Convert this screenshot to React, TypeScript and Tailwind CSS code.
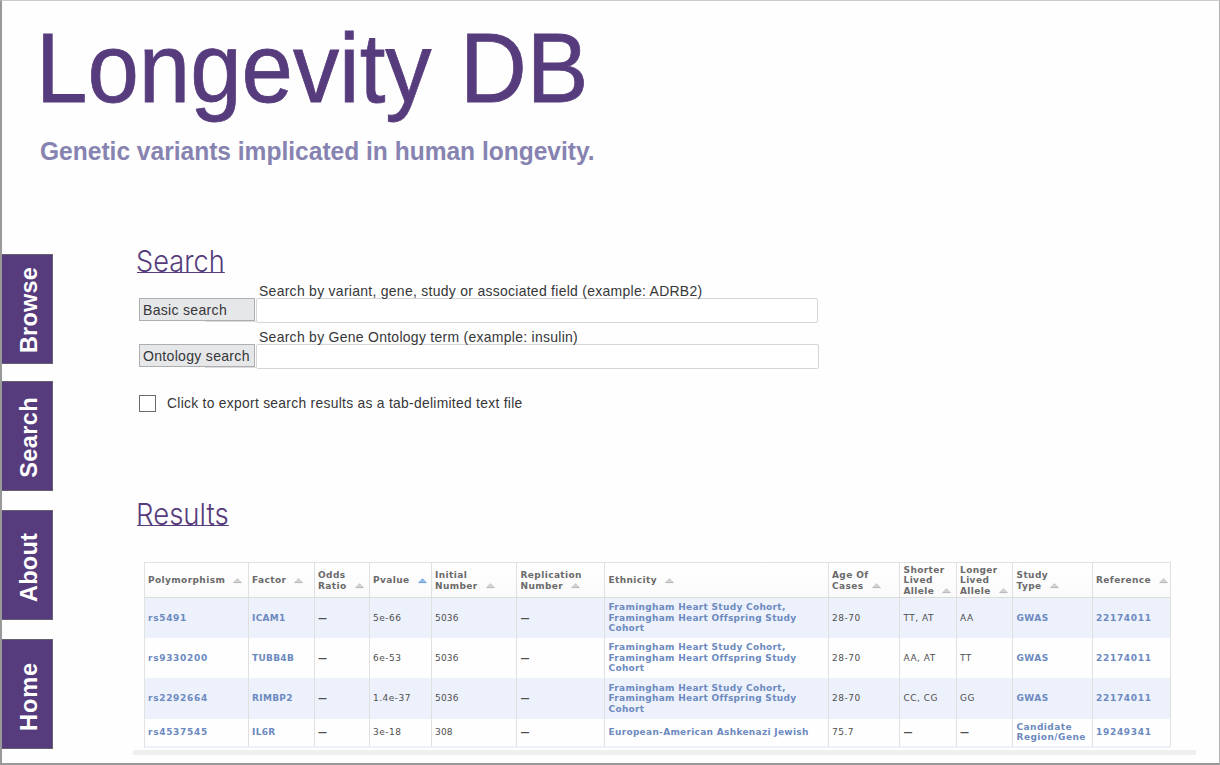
import React from "react";

const tabs = [
  { name: "Browse", box: "mb-[17px] pb-[10px] tracking-[0.2px]" },
  { name: "Search", box: "mb-[19px] pb-[12px] tracking-[0.4px]" },
  { name: "About", box: "mb-[19px] pb-[17px] tracking-[0.2px]" },
  { name: "Home", box: "pb-[17px] tracking-[0.9px]" },
];

type Column = { lines: string[]; text: string; active?: boolean };

const link = "font-bold tracking-[0.3px] text-[#6c8abf]";
const linkDigits = "font-bold tracking-[0.7px] text-[#6c8abf]";
const plain = "tracking-[0.5px] text-[#4f4f4f]";

const columns: Column[] = [
  { lines: ["Polymorphism"], text: linkDigits },
  { lines: ["Factor"], text: link },
  { lines: ["Odds", "Ratio"], text: plain },
  { lines: ["Pvalue"], text: plain, active: true },
  { lines: ["Initial", "Number"], text: "tracking-[0.2px] text-[#4f4f4f]" },
  { lines: ["Replication", "Number"], text: plain },
  { lines: ["Ethnicity"], text: link },
  { lines: ["Age Of", "Cases"], text: plain },
  { lines: ["Shorter", "Lived", "Allele"], text: plain },
  { lines: ["Longer", "Lived", "Allele"], text: plain },
  { lines: ["Study", "Type"], text: "font-bold tracking-[0.45px] text-[#6c8abf]" },
  { lines: ["Reference"], text: linkDigits },
];

const cohort = "Framingham Heart Study Cohort,\nFramingham Heart Offspring Study\nCohort";

const rows = [
  ["rs5491", "ICAM1", "—", "5e-66", "5036", "—", cohort, "28-70", "TT, AT", "AA", "GWAS", "22174011"],
  ["rs9330200", "TUBB4B", "—", "6e-53", "5036", "—", cohort, "28-70", "AA, AT", "TT", "GWAS", "22174011"],
  ["rs2292664", "RIMBP2", "—", "1.4e-37", "5036", "—", cohort, "28-70", "CC, CG", "GG", "GWAS", "22174011"],
  ["rs4537545", "IL6R", "—", "3e-18", "308", "—", "European-American Ashkenazi Jewish", "75.7", "—", "—", "Candidate\nRegion/Gene", "19249341"],
];

function SortMark({ active }: { active?: boolean }) {
  return (
    <svg width="9" height="6" viewBox="0 0 9 6" className="ml-[8px] inline-block">
      <path d="M4.5 0.4 L8 4.2 H1 Z" fill={active ? "#8db9ea" : "#d4d4d4"} />
      <path d="M0.4 4.6 H8.6" stroke={active ? "#6a9ddb" : "#b5b5b5"} strokeWidth="1" />
      <path d="M1.2 4 L4.5 0.6 L7.8 4" fill="none" stroke={active ? "#7dabdf" : "#c0c0c0"} strokeWidth="0.7" />
    </svg>
  );
}

type SearchRowProps = { label: string; hint: string; button: string; field: string };

function SearchRow({ label, hint, button, field }: SearchRowProps) {
  return (
    <div className="h-[46px]">
      <div className="ml-[119.5px] h-[15px] w-max origin-left scale-x-[0.962] whitespace-nowrap leading-[16px]">{hint}</div>
      <div className="flex">
        <div className="w-[117px]">
          <button className={`block h-[23px] whitespace-nowrap border border-[#adadb2] bg-[#e6e7e9] pl-[3px] text-left ${button}`}>
            <span className="block w-max origin-left scale-x-[0.97]">{label}</span>
          </button>
          <div className="ml-[66px] h-px bg-[#dcdcdc]" />
        </div>
        <input aria-label={label} className={`h-[25px] rounded-[2px] border border-[#d6d6d6] bg-white outline-none ${field}`} />
      </div>
    </div>
  );
}

export default function App() {
  return (
    <div className="flex h-[765px] w-[1220px] flex-col overflow-hidden border-t border-r border-b-2 border-l-2 border-t-[#cbcbcb] border-r-[#b0b0b0] border-b-[#999999] border-l-[#999999] bg-[#fefefe] font-['Liberation_Sans',Arial,sans-serif]">
      <header className="h-[253px] shrink-0 pl-[31px]">
        <h1 className="ml-[3px] mt-[8px] h-[118px] w-max origin-left scale-x-[0.938] whitespace-nowrap text-[98.5px] leading-[118px] text-[#573c7d] [-webkit-text-stroke:0.8px_#573c7d] [word-spacing:3px]">
          Longevity DB
        </h1>
        <p className="ml-[7px] mt-[9px] w-max origin-left scale-x-[0.944] whitespace-nowrap text-[26px] font-bold leading-[30px] text-[#8783b1]">
          Genetic variants implicated in human longevity.
        </p>
      </header>
      <div className="flex">
        <nav className="w-[52px] shrink-0">
          {tabs.map((t) => (
            <a
              key={t.name}
              className={`flex h-[110px] w-[51px] items-end justify-center border border-l-0 border-[#666070] bg-[#573c7d] pl-[4px] text-[23.5px] font-bold text-white ${t.box}`}
            >
              <span className="rotate-180 leading-[28px] [writing-mode:vertical-rl]">{t.name}</span>
            </a>
          ))}
        </nav>
        <main className="flex flex-col pl-[79px]">
          <section className="h-[253px] pl-[4px] text-[14.5px] tracking-[0.3px] text-[#363639]">
            <h2 className="-mt-[11px] h-[30px] w-max origin-left scale-x-[0.905] border-b border-[#573c7d] font-['Inter',sans-serif] text-[30px] font-light leading-[36px] tracking-normal text-[#573c7d]">
              <span className="-ml-px">Search</span>
            </h2>
            <div className="ml-[2px] pt-[10px]">
              <SearchRow
                label="Basic search"
                hint="Search by variant, gene, study or associated field (example: ADRB2)"
                button="w-[116px] leading-[22px]"
                field="w-[562px]"
              />
              <SearchRow
                label="Ontology search"
                hint="Search by Gene Ontology term (example: insulin)"
                button="w-[116px] leading-[23px]"
                field="w-[563px]"
              />
            </div>
            <label className="ml-[2px] mt-[18px] flex items-center">
              <span className="h-[17px] w-[17px] border border-[#6b6b6b] bg-white" />
              <span className="ml-[11px] origin-left scale-x-[0.955] whitespace-nowrap">Click to export search results as a tab-delimited text file</span>
            </label>
          </section>
          <section>
            <h2 className="-mt-[11px] ml-[4px] h-[30px] w-max origin-left scale-x-[0.918] border-b border-[#573c7d] font-['Inter',sans-serif] text-[30px] font-light leading-[36px] text-[#573c7d]">
              <span className="-ml-px">Results</span>
            </h2>
            <div className="ml-[10.5px] mt-[36px] w-[1027.5px] border-l border-t border-[#e2e2e2] font-['DejaVu_Sans',Verdana,sans-serif] text-[9px] leading-[10.5px]">
              <div className="grid h-[35px] grid-cols-[104px_66px_55px_62px_85.5px_88px_223.5px_71.5px_56.5px_56.5px_79.5px_78.5px] border-b border-[#dcdcdc] bg-gradient-to-b from-white to-[#fafafa]">
                {columns.map((c) => (
                  <div key={c.lines.join()} className="flex items-center whitespace-nowrap border-r border-[#e0e0e0] pl-[3.5px] pt-px font-bold tracking-[0.4px] text-[#6a6a6a]">
                    <div>
                      {c.lines.map((l, i) => (
                        <div key={l}>
                          {l}
                          {i === c.lines.length - 1 && <SortMark active={c.active} />}
                        </div>
                      ))}
                    </div>
                  </div>
                ))}
              </div>
              <div className="grid grid-rows-[40px_40px_40.5px_27.5px]">
                {rows.map((r, n) => (
                  <div
                    key={r[0]}
                    className={`grid grid-cols-[104px_66px_55px_62px_85.5px_88px_223.5px_71.5px_56.5px_56.5px_79.5px_78.5px] ${n % 2 === 0 ? "bg-[#edf1fb]" : "bg-[#fefefe]"}`}
                  >
                    {r.map((v, i) => (
                      <div
                        key={i}
                        className={`flex items-center whitespace-pre border-r border-[#e0e0e0] pl-[3.5px] ${columns[i].text} ${v === "—" ? "font-bold" : ""}`}
                      >
                        {v}
                      </div>
                    ))}
                  </div>
                ))}
              </div>
              <div className="h-[2px] bg-[#edf1fb]" />
            </div>
            <div className="mt-[2px] h-[5px] w-[1063px] bg-[#efefef]" />
          </section>
        </main>
      </div>
    </div>
  );
}
